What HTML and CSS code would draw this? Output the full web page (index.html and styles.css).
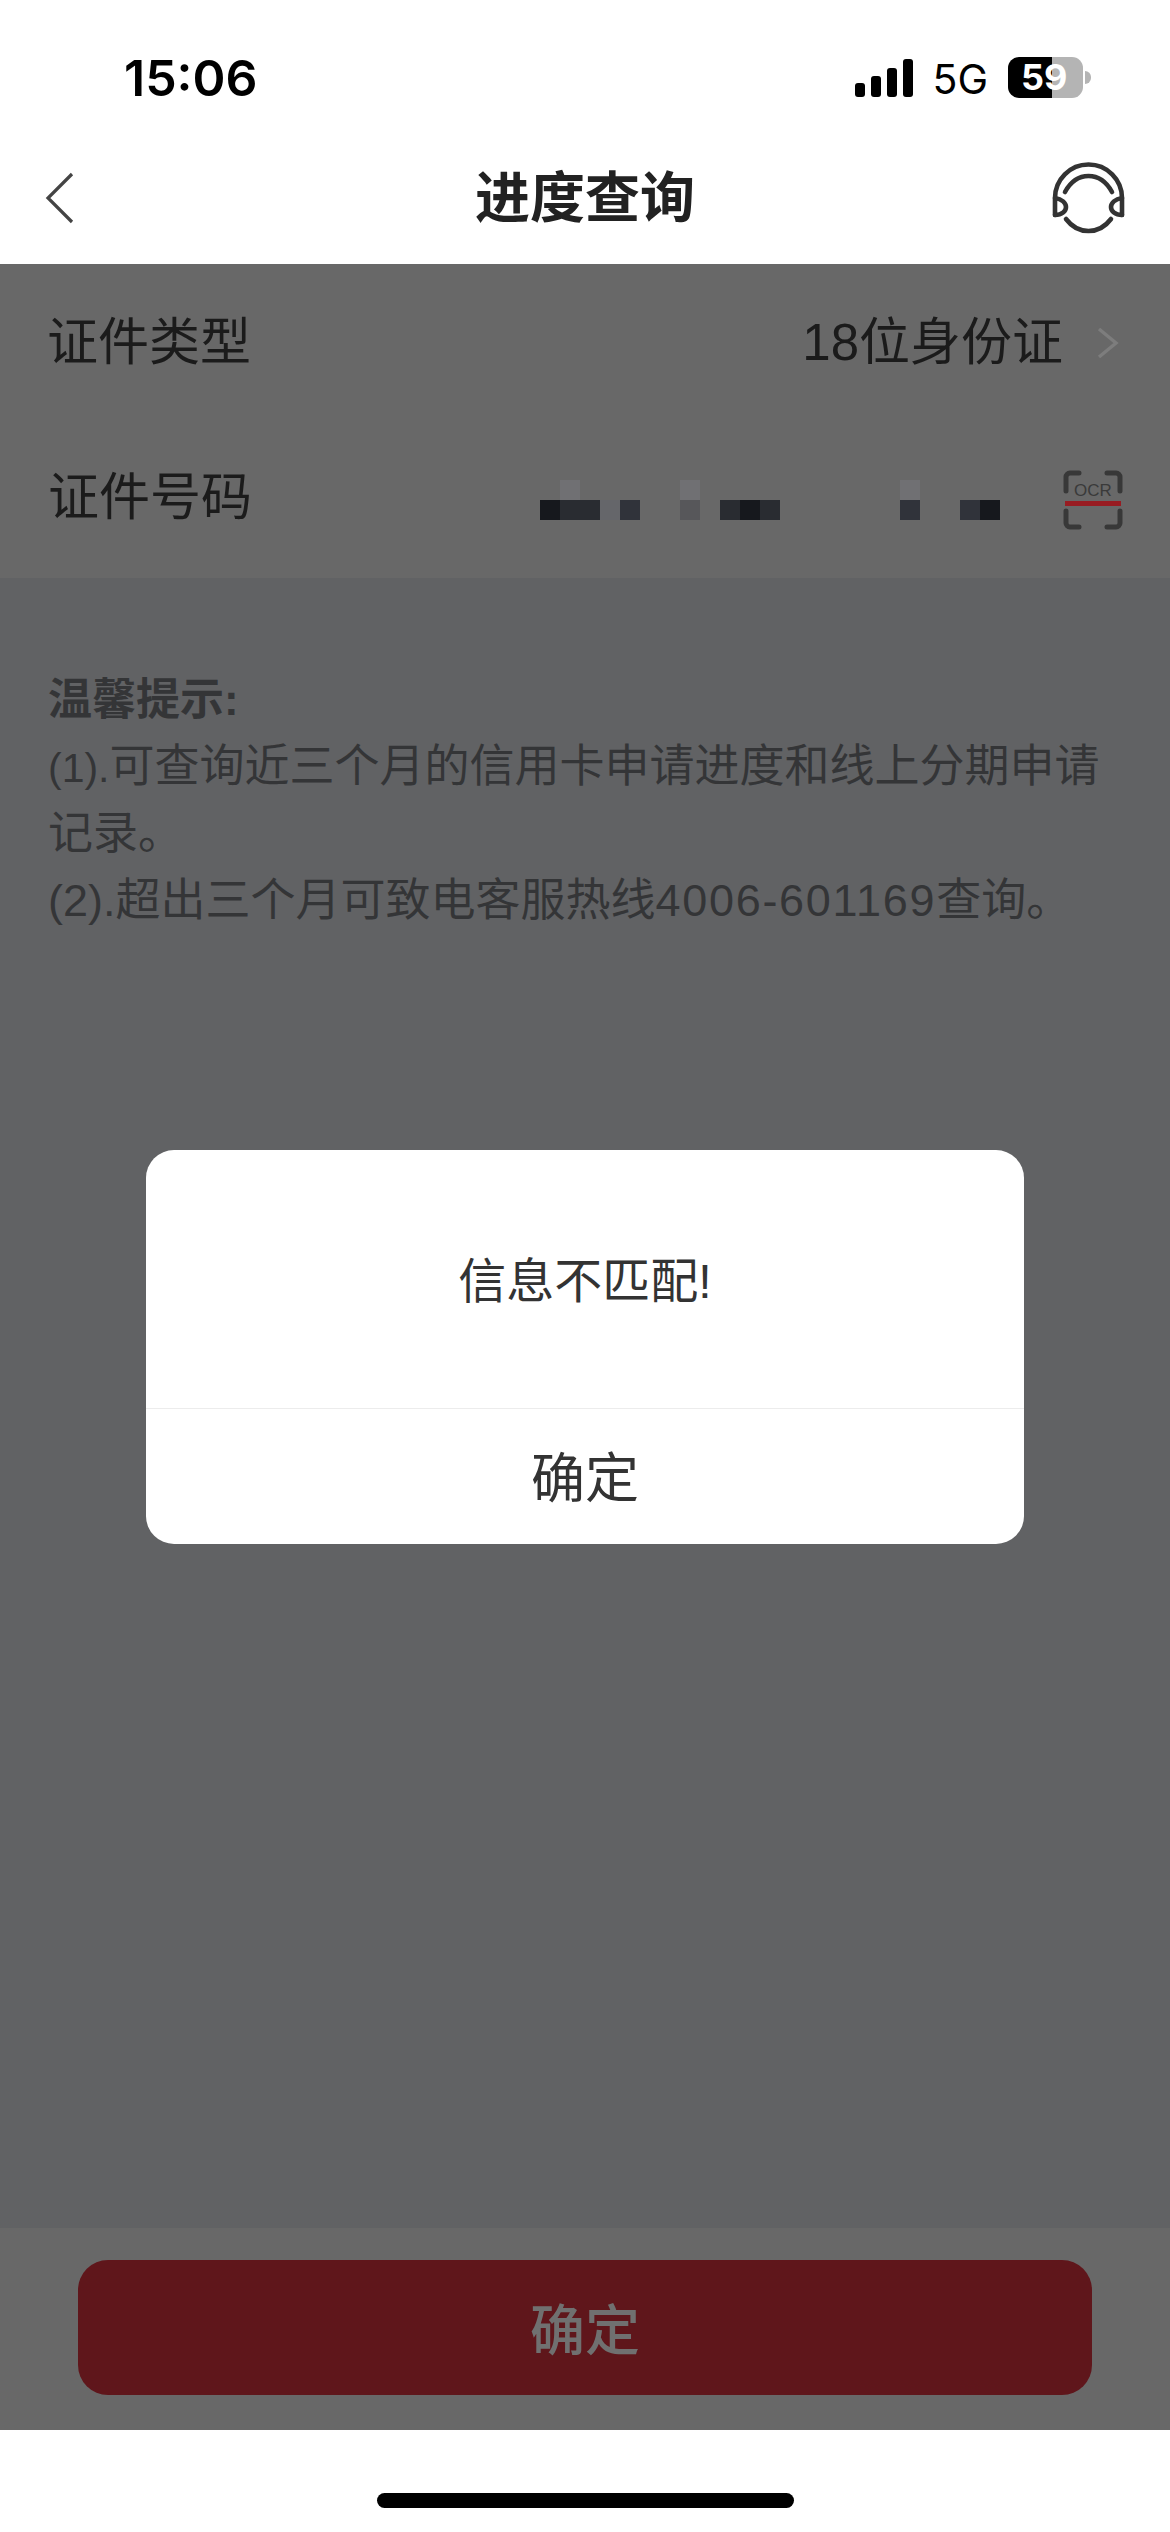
FILE: index.html
```html
<!DOCTYPE html>
<html lang="zh-CN">
<head>
    <meta charset="UTF-8">
    <meta name="viewport" content="width=device-width, initial-scale=1.0">
    <link rel="stylesheet" href="styles.css">
    <title>进度查询</title>
</head>
<body>
    <!-- status bar -->
    <div class="status">
        <span class="time">15:06</span>
        <div class="status-right">
            <div class="signal">
                <i class="bar bar1"></i><i class="bar bar2"></i><i class="bar bar3"></i><i class="bar bar4"></i>
            </div>
            <span class="net">5G</span>
            <div class="battery">59</div>
            <i class="battery-nub"></i>
        </div>
    </div>

    <!-- nav -->
    <header class="nav">
        <svg class="nav-back" width="29" height="52" viewBox="0 0 29 52">
            <path d="M27 2 L3 26 L27 50" fill="none" stroke="#444" stroke-width="3.2"/>
        </svg>
        <h1 class="nav-title">进度查询</h1>
        <svg class="nav-service" width="73" height="72" viewBox="0 0 73 72" fill="none" stroke="#333" stroke-width="4.6" stroke-linecap="round" stroke-linejoin="round">
            <path d="M3 53 V36 a33 33 0 0 1 67 0 V53"/>
            <path d="M13 30 C19 19 27 14 36.5 14 C46 14 54 19 60 30"/>
            <path d="M3 36 C10 37 14 41 14 45 C14 49 10 53 3 53"/>
            <path d="M70 36 C63 37 59 41 59 45 C59 49 63 53 70 53"/>
            <path d="M14 57 C20 65 28 69 36.5 69 C45 69 53 65 59 57"/>
        </svg>
    </header>

    <div class="page">
        <main class="content">
            <div class="row">
                <span class="row-label">证件类型</span>
                <span class="row-value">18位身份证</span>
                <svg class="row-arrow" width="24" height="32" viewBox="0 0 24 32">
                    <path d="M3 2 L20 16 L3 30" fill="none" stroke="#7d7d7d" stroke-width="3.4"/>
                </svg>
            </div>
            <div class="row row-id">
                <span class="row-label">证件号码</span>
                <!-- masked number -->
                <div class="mosaic">
                    <div class="mosaic-line">
                        <i></i><i class="m6"></i><i></i><i></i><i></i><i></i><i></i><i class="m6"></i><i></i><i></i><i></i><i></i><i></i><i></i><i></i><i></i><i></i><i></i><i class="m6"></i>
                    </div>
                    <div class="mosaic-line">
                        <i class="m1"></i><i class="m2"></i><i class="m2"></i><i class="m5"></i><i class="m3"></i><i></i><i></i><i class="m4"></i><i></i><i class="m2"></i><i class="m1"></i><i class="m2"></i><i></i><i></i><i></i><i></i><i></i><i></i><i class="m3"></i><i></i><i></i><i class="m3"></i><i class="m1"></i>
                    </div>
                </div>
                <svg class="ocr" width="60" height="60" viewBox="0 0 60 60">
                    <g fill="none" stroke="#383838" stroke-width="5" stroke-linecap="round" stroke-linejoin="round">
                        <path d="M3 21 V7 a4 4 0 0 1 4 -4 H16"/>
                        <path d="M44 3 H53 a4 4 0 0 1 4 4 V21"/>
                        <path d="M3 41 V53 a4 4 0 0 0 4 4 H16"/>
                        <path d="M44 57 H53 a4 4 0 0 0 4 -4 V41"/>
                    </g>
                    <text x="30" y="26" text-anchor="middle" class="ocr-text">OCR</text>
                    <rect x="2" y="31" width="56" height="5" fill="#981c22"/>
                </svg>
            </div>

            <section class="tips">
                <p class="tips-title">温馨提示:</p>
                <p><span class="tight">(1).</span>可查询近三个月的信用卡申请进度和线上分期申请<br>记录。</p>
                <p>(2).超出三个月可致电客服热线<span class="wide">4006-601169</span>查询。</p>
            </section>
        </main>

        <div class="bottom">
            <button class="submit">确定</button>
        </div>

        <!-- alert -->
        <div class="overlay">
            <div class="dialog">
                <div class="dialog-msg">信息不匹配!</div>
                <div class="dialog-btn">确定</div>
            </div>
        </div>
    </div>

    <footer class="home">
        <i class="home-bar"></i>
    </footer>
</body>
</html>
```

FILE: styles.css
```css
:root {
    --cjk: "Liberation Sans", "Noto Sans CJK SC", sans-serif;
    --mask-light: #686868;
    --mask-dark: #616264;
}
* {
    box-sizing: border-box;
}
html, body {
    margin: 0;
    height: 2532px;
    overflow: hidden;
}
body {
    display: flex;
    flex-direction: column;
    background-color: #fff;
    font-family: var(--cjk);
}
i {
    display: block;
}

/* status bar */
.status {
    height: 132px;
    display: flex;
    justify-content: space-between;
    padding: 49px 79px 0 124px;
    flex-shrink: 0;
}
.time {
    font-family: Inter, sans-serif;
    font-size: 50px;
    font-weight: 600;
    line-height: 58px;
    color: #000;
}
.status-right {
    display: flex;
    align-items: flex-start;
    padding-top: 8px;
}
.signal {
    display: flex;
    align-items: flex-end;
    gap: 6px;
    height: 38px;
    margin-top: 2px;
}
.bar {
    width: 10px;
    background-color: #000;
    border-radius: 3px;
}
.bar1 { height: 14px; }
.bar2 { height: 21px; }
.bar3 { height: 29px; }
.bar4 { height: 38px; }
.net {
    font-family: Inter, sans-serif;
    font-size: 41px;
    line-height: 44px;
    margin: 0 20px 0 19px;
    color: #000;
}
.battery {
    width: 75px;
    height: 41px;
    border-radius: 11px;
    background: linear-gradient(to right, #000 44px, #b4b4b4 44px);
    color: #fff;
    font-family: Inter, sans-serif;
    font-size: 36px;
    font-weight: 700;
    line-height: 41px;
    text-align: left;
    padding-left: 13px;
}
.battery-nub {
    width: 6px;
    height: 13px;
    margin: 14px 0 0 2px;
    background-color: #b4b4b4;
    border-radius: 0 6px 6px 0;
}

/* nav */
.nav {
    height: 132px;
    display: grid;
    grid-template-columns: 1fr auto 1fr;
    align-items: center;
    padding: 0 45px;
    flex-shrink: 0;
}
.nav-title {
    margin: 0;
    font-size: 55px;
    font-weight: 700;
    line-height: 72px;
    color: #222;
}
.nav-service {
    justify-self: end;
}

/* page under the mask */
.page {
    flex: 1;
    display: flex;
    flex-direction: column;
    position: relative;
    background-color: var(--mask-dark);
}
.content {
    flex: 1;
}
.row {
    height: 157px;
    display: flex;
    align-items: center;
    padding: 0 50px 0 47px;
    background-color: var(--mask-light);
    color: #1b1b1b;
}
.row-id {
    padding: 0 47px 4px 48px;
}
.row-label {
    font-size: 51px;
    line-height: 60px;
}
.row-value {
    margin-left: auto;
    font-size: 51px;
    line-height: 60px;
}
.row-arrow {
    margin-left: 33px;
}
.mosaic {
    margin-left: auto;
    margin-right: 63px;
    margin-top: 4px;
}
.mosaic-line {
    display: flex;
    height: 20px;
}
.mosaic-line i {
    width: 20px;
    height: 20px;
}
.m1 { background-color: #16181d; }
.m2 { background-color: #292c31; }
.m3 { background-color: #30333a; }
.m4 { background-color: #57575a; }
.m5 { background-color: #65666a; }
.m6 { background-color: #707073; }
.ocr {
    flex-shrink: 0;
    margin-top: 4px;
}
.ocr-text {
    font-family: "Liberation Sans", sans-serif;
    font-size: 17px;
    fill: #3a3a3a;
}

/* hint text */
.tips {
    padding: 89px 48px 0;
    color: #343537;
    font-size: 45px;
    line-height: 66.6px;
}
.tips p {
    margin: 0;
}
.tips-title {
    font-weight: 700;
    font-size: 44px;
}
.tight {
    font-size: 41px;
}
.wide {
    letter-spacing: 1.7px;
}

/* bottom button */
.bottom {
    height: 202px;
    padding: 32px 78px 0;
    background-color: var(--mask-light);
}
.submit {
    display: block;
    width: 100%;
    height: 135px;
    border: none;
    border-radius: 30px;
    background-color: #5f161b;
    color: #707070;
    font-family: var(--cjk);
    font-size: 55px;
    font-weight: 500;
    padding: 0 0 4px;
}

/* dialog */
.overlay {
    position: absolute;
    inset: 0;
    display: flex;
    align-items: center;
    justify-content: center;
}
.dialog {
    width: 878px;
    height: 394px;
    display: flex;
    flex-direction: column;
    background-color: #fff;
    border-radius: 28px;
    overflow: hidden;
    color: #333;
}
.dialog-msg {
    height: 259px;
    display: flex;
    align-items: center;
    justify-content: center;
    padding-bottom: 4px;
    font-size: 48px;
    border-bottom: 1px solid #ececec;
}
.dialog-btn {
    flex: 1;
    display: flex;
    align-items: center;
    justify-content: center;
    padding-bottom: 4px;
    font-size: 54px;
}

/* home indicator */
.home {
    height: 102px;
    padding-top: 63px;
    display: flex;
    justify-content: center;
    flex-shrink: 0;
}
.home-bar {
    width: 417px;
    height: 15px;
    border-radius: 8px;
    background-color: #000;
}
```
